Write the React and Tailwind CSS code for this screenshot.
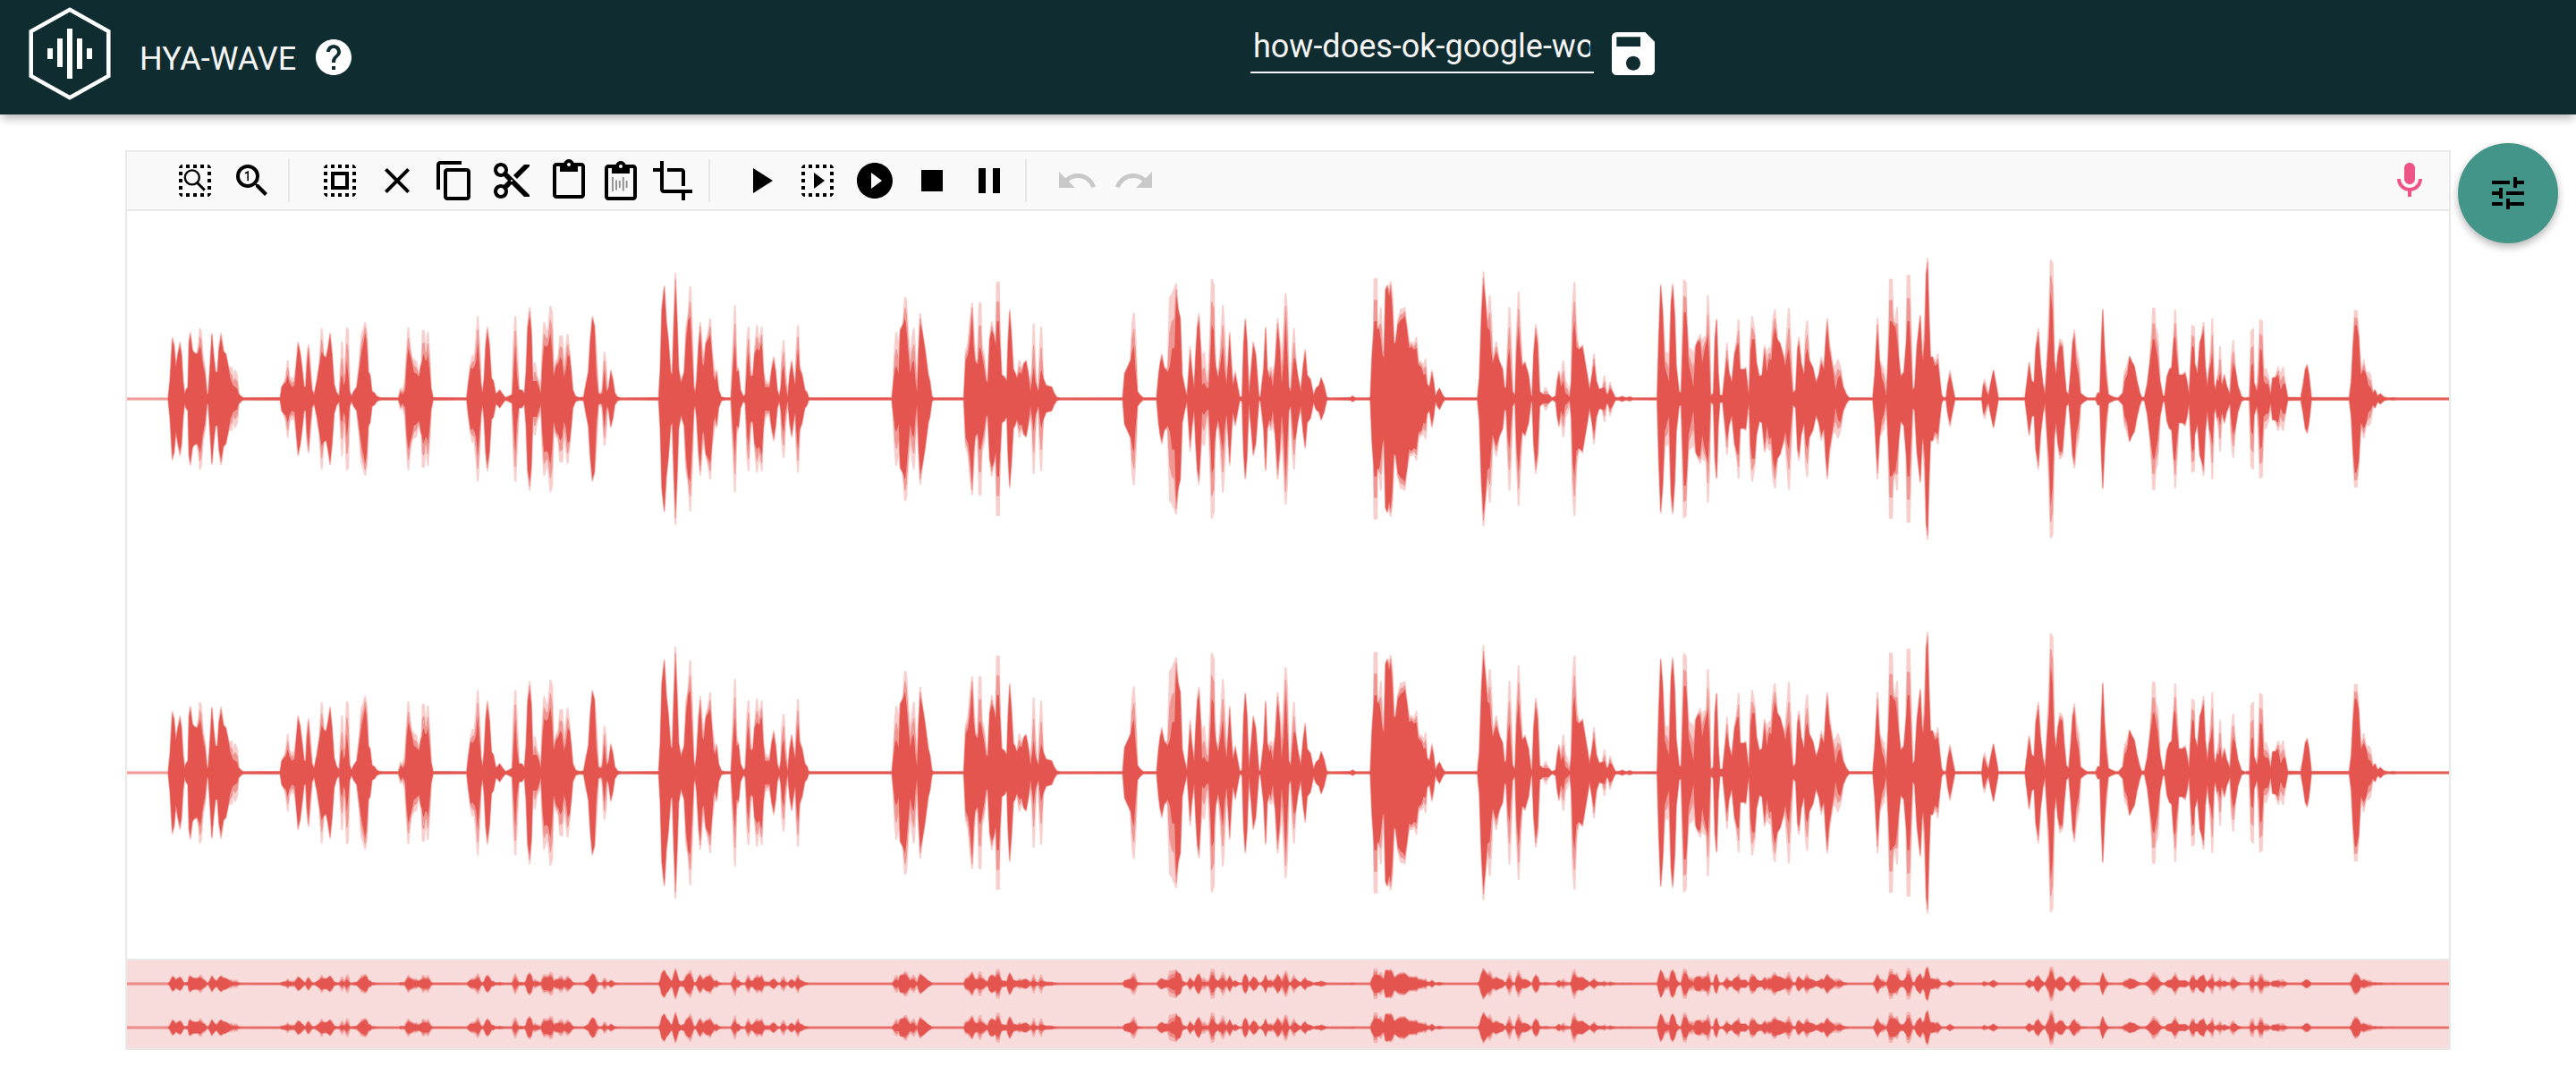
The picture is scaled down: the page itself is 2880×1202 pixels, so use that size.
import React from "react";
import {
  MdHelp,
  MdSave,
  MdSelectAll,
  MdClose,
  MdContentCopy,
  MdContentCut,
  MdContentPaste,
  MdCrop,
  MdPlayArrow,
  MdPlayCircleFilled,
  MdStop,
  MdPause,
  MdUndo,
  MdRedo,
  MdMic,
  MdTune,
} from "react-icons/md";

/* Recorded speech, in clips. Each clip has its own time base (start, scale);
   a sample reads "time:body" or "time:body:peak", levels in thirds of a unit. */
const CLIPS = [
  {
    start: -2,
    scale: 2.24,
    data:
      "108:8 112:60 118:195:205 122:180 127:108 132:150 137:178:190 141:150 145:60 149:15 152:30 157:40 160:190 163:212:222 168:165 172:155 180:150 185:165:190 187:180:235 190:165:225 194:120:145 200:80:100 205:15 208:20 213:120 217:212:218 221:150 226:90 231:90 235:170 240:205:220 246:160 252:150 258:110 263:70:100 267:55:105 270:45:60 275:40:95 280:35:80 284:17 290:8 296:3 " +
      "388:4 392:40 397:50 402:55:70 407:80:128 411:55:75 417:40:65 424:45:70 428:110 433:180:190 438:155 443:100 448:40 452:40 455:110:130 459:165:180 463:90:120 468:30 473:15 480:60 487:120 492:160:235 497:145 503:138 508:170 513:210:220 518:150 523:50 529:22 536:10 540:70:120 543:80:190 547:45:100 551:60:110 555:130:237 558:90:230 562:25 567:8 572:25 580:40 587:110:130 592:160:215 597:190:235 601:220:255 605:180:220 609:90 613:80 618:25 624:20 630:8 640:3 " +
      "684:3 690:25:35 695:15:25 701:30:60 705:120:150 709:170:237 713:150:180 717:130:142 723:90:130 729:85:125 736:75 740:110 743:120:130 745:140:228 748:150:228 751:130:180 755:130:180 758:150:222 762:100:140 766:35 771:4 " +
      "855:3 860:60 865:105:115 870:100:145 875:110:140 879:130:200 883:190:275 887:120:180 891:50 895:20 899:70 903:180 907:225:240 912:180 917:70 922:60 928:17 933:22 938:30 944:18 952:4 960:8 969:15 973:100:200 977:180:275 981:80:180 986:30 993:30 1000:18 1004:90 1008:240 1013:280:305 1017:230 1021:60 1026:60:120 1031:60:75 1036:40:60 1041:18 1045:120:160 1049:180:255 1054:175:230 1059:180:225 1065:220:310 1069:170:290 1073:75 1079:110:125 1085:120:140 1089:140:210 1094:130:210 1099:75:90 1104:100:170 1108:150:215 1113:140:150 1117:90 1121:30 1128:8 1138:4 " +
      "1148:6 1154:50 1160:90 1165:200 1170:268:275 1175:245 1180:80:150 1185:20 1190:15 1195:20:40 1200:100:155 1204:40:120 1207:25 1211:40 1216:90:95 1221:65 1226:20 1233:6 1242:2 " +
      "1336:4 1340:100 1344:300 1350:372:378 1355:260 1360:200 1366:90 1370:80 1374:250 1378:380:420 1382:260 1386:100 1392:55 1400:90 1405:200:240 1410:265:280 1415:275:375 1419:170:250 1424:40 1427:20 1431:60 1436:180 1440:230:255 1445:120:170 1449:110:140 1454:185 1460:200:220 1465:215:268 1469:160 1473:80:120 1477:60:75 1481:85:95 1486:30 1493:6 1503:3 1517:3 1522:110:160 1527:190:312 1531:90:120 1536:95 1541:30 1548:8 1553:15 1558:130:200 1561:160:240 1565:80:120",
  },
  {
    start: 698,
    scale: 2.24,
    data:
      "0:75 4:80 8:150 14:170:245 20:160:180 26:190:240 30:100 34:40:65 40:40:55 46:40:55 51:100 56:130:140 61:90 65:30 70:8 74:40 77:90:150 81:115:195 85:50:100 91:5 96:80 101:120:127 106:75 110:45 113:110:160 117:170:245 121:100:110 127:80 134:30 139:22 144:3 " +
      "352:3 356:60 360:100:180 363:110:222 369:85:170 373:230 380:250 385:270:340 388:240:330 393:160:215 398:85:120 403:120:200 407:130:235 411:60:150 415:20 419:170 423:255:285 428:225 435:165 443:80 447:60 452:10 456:3 " +
      "532:3 537:130:160 543:150:185 548:200:260 553:290:320 557:170:220 561:125:130 567:115:130 571:170:320 574:170:320 577:150:180 583:105:145 588:60:75 592:55 597:200 602:230:257 607:215 612:180 615:260:390 620:260:390 623:180:200 627:80 633:75 640:60 643:190 647:285:298 651:220 656:100 660:90 665:70 671:90:128 677:85:100 683:120 688:125:128 693:90 699:25:50 703:60:100 707:110:250 711:60:120 714:45 719:25 722:60:150 726:100:240 731:70 738:45 752:40 758:20 765:5 775:2 " +
      "930:3 935:85 942:105 950:130 954:160:250 958:180:287 962:100:200 967:25 974:12 982:3 1015:3 1020:80 1024:120 1028:140:150 1034:105 1043:90:100 1048:110:340 1054:170:350 1060:170:370 1064:350:385 1069:300 1074:270 1079:80 1085:40 1091:8 1095:80 1099:150:175 1103:100 1109:35 1113:150 1117:240 1121:265:285 1125:180 1129:45:130 1134:55:155 1139:40:85 1145:35:70 1150:150:250 1153:250:400 1158:230:380 1160:150:200 1163:110 1169:70 1175:120:170 1181:180:312 1185:100:220 1190:50 1194:120 1198:205:222 1202:120 1206:45 1212:80:90 1218:40 1223:5 1229:8 1233:180 1237:258:268 1241:200 1246:15 1252:100 1257:180:190 1263:150 1271:10 1275:5 1283:100 1288:230:240 1292:100 1297:70:90 1301:80:105 1306:40:85 1312:120 1318:240:268 1323:180:200 1328:50:120 1333:120:220 1338:270:352 1342:160:290 1346:40 1351:25 1355:90:160 1359:140:235 1363:130 1368:80 1376:25 1382:110 1387:155:165 1392:80 1400:65 1408:12 1414:35 1422:45 1427:70 1434:45 1441:5 1447:2 1500:4 1506:9 1514:2 1549:3",
  },
  {
    start: 1358,
    scale: 2.24,
    data:
      "72:8 76:140 80:220 82:260:402 88:260:402 89:235 94:235:250 98:200:305 102:150:180 106:135:165 110:365 114:378:380 119:345:375 123:370:392 127:300:340 131:185 135:190 141:250:260 148:265:300 154:270:300 158:280:305 163:240 169:170:190 175:175:190 181:165:180 187:170:205 192:115:130 200:105:122 205:80:110 210:85:133 214:50 220:40 226:85:95 230:60 235:8 240:25 245:35 252:15 258:3 " +
      "340:3 345:70 350:280 355:390:425 360:330 365:240:260 371:230:345 375:160:260 378:120 387:160:190 395:125 403:100 408:35 412:40 416:130:180 420:170:305 424:90:200 428:25 434:12 438:160:200 443:245:357 447:170:240 452:110 459:120:125 468:80 474:15 477:8 481:150 486:225:248 491:180:200 496:25 504:15 511:15:37 518:15 527:3 536:10 540:60 544:85:92 549:40:60 555:60:126 560:20:60 565:15:48 571:6 575:60 579:220:320 583:260:390 588:175:220 594:165 603:175:180 610:120 615:80 621:30 627:80 632:120:150 638:60 645:32 653:35 658:40:75 664:15 668:20 672:35:55 678:25 685:5 692:3 703:8 712:3 722:7 730:2 " +
      "790:3 794:200 799:375:382 804:290 809:110:150 815:80:155 820:60:130 825:320 829:372:385 834:280 838:110 845:25 850:20 854:180:230 857:290:398 862:290:390 865:240 869:120:170 875:80:165 881:40:150 887:180 893:195:200 898:190:215 903:120:185 908:160:205 914:195:210 917:220:345 921:120:240 924:10 931:20 935:200 939:262:266 943:90 947:12 954:12 960:90 965:140:185 970:90 977:55 984:150 990:180:200 994:190:265 998:100 1005:98 1012:100:105 1017:40 1020:15 1024:160:200 1028:200:275 1034:200:225 1039:120 1046:75 1053:80 1059:160:178 1065:90:150 1071:135:170 1076:130:170 1080:200:260 1085:240:298 1091:200 1098:185 1105:150 1111:110:140 1116:150:230 1120:170:302 1124:110:200 1130:20 1137:30 1142:170 1145:185:205 1151:120 1158:80 1162:150:220 1166:170:260 1171:130 1180:105 1188:55 1195:80 1201:120:138 1208:100 1212:190 1216:250:268 1221:170:190 1230:100:110 1237:30:110 1243:70:130 1249:80:105 1256:40 1264:15 1271:3 " +
      "1330:3 1335:80 1339:180 1342:230:268 1347:130 1353:70:110 1358:50:100 1364:10 1369:150 1373:260:400 1378:260:400 1381:250:270 1387:240:260 1391:200:305 1395:140 1400:75 1408:90 1414:190 1417:260:413 1422:260:413 1425:170:260 1430:30 1435:40 1441:180 1449:272:280 1453:160",
  },
  {
    start: 2008,
    scale: 2.529,
    data:
      "0:130:140 5:200:270 9:420 13:445:470 17:270 21:140 27:140 33:110:130 38:115:130 42:120:150 47:70 52:15 57:4 65:4 70:50 76:80:92 82:50 90:3 166:3 171:50 174:45:65 179:25:40 185:12 191:50 199:95 206:50 213:3 " +
      "288:3 294:60 300:115:122 307:60 314:55 319:170 326:215:235 332:120 339:50 345:15 350:110 356:200:270 361:360:465 366:300:455 371:130 376:80 381:150 387:180:200 394:175:190 399:100 405:25 412:15 418:100 423:190 428:210:230 433:120:170 440:80:130 445:20 455:10 465:2 488:3 494:20 500:20 504:180 508:295:300 513:170 518:70:100 524:15 534:8 545:3 552:3 565:20 570:60:90 577:80:110 584:142 590:125 597:110 605:60 613:20 618:5 " +
      "626:5 634:50 641:120 648:180:240 650:200:303 654:200:303 657:180:240 663:140:215 670:60 678:10 683:10 690:75 697:100 703:105 709:200 713:210:297 717:150:210 723:80 733:80 741:85:90 746:60 752:15 757:120 761:180:245 766:170:240 768:120 776:85 783:190 788:210 793:230:255 798:110 804:40 809:100 814:120:170 818:160:268 823:50 827:30 831:65 836:60:100 840:90:175 845:45 852:75:82 858:45 868:15 872:80:140 877:120:195 883:100 890:45 900:8 910:2 " +
      "923:5 928:110:225 933:120:235 936:55 944:25 949:60:130 953:170:265 958:160:260 963:60:90 969:50:100 976:50:75 983:15 988:70 997:72 1004:80:105 1011:30:80 1018:50:105 1024:50 1031:5 1068:4 1075:50 1081:100 1086:110:115 1091:80 1098:4 1205:4 1211:60 1216:180 1221:250:295 1226:245:295 1232:210 1238:80 1246:100:130 1253:80 1259:45:90 1265:40:80 1272:20 1278:30 1285:10 1293:17 1303:6 1315:2 1330:4 1340:2 1488:2",
  },
];

const LENGTH = 2596;

const SAMPLES = CLIPS.flatMap(({ start, scale, data }) =>
  data.split(" ").map((s) => {
    const [t, body, peak] = s.split(":").map(Number);
    return { x: start + t / scale, body: body / 3, peak: (peak ?? body) / 3 };
  })
);

function outline(level, cy, gain) {
  const top = SAMPLES.map((s) => `${s.x.toFixed(1)},${(cy - level(s) * gain).toFixed(1)}`);
  const bottom = SAMPLES.map((s) => `${s.x.toFixed(1)},${(cy + level(s) * gain).toFixed(1)}`).reverse();
  return [...top, ...bottom].join(" ");
}

const bodyLevel = (s) => s.body;
const middleLevel = (s) => s.body + (s.peak - s.body) * 0.5;
const peakLevel = (s) => s.peak;

function Channel({ cy, gain }) {
  return (
    <g fill="#e5554f" stroke="#e5554f" strokeLinejoin="round" strokeWidth="0">
      <rect x="0" y={cy - 2} width={LENGTH} height="4" opacity="0.35" />
      <rect x="0" y={cy - 1} width={LENGTH} height="2" opacity="0.35" />
      <polygon points={outline(peakLevel, cy, gain)} strokeWidth="2" opacity="0.28" />
      <polygon points={outline(middleLevel, cy, gain)} strokeWidth="1" opacity="0.45" />
      <polygon points={outline(bodyLevel, cy, gain)} />
    </g>
  );
}

function DottedFrame({ children }) {
  return (
    <svg viewBox="0 0 24 24" className="size-12" fill="currentColor">
      <path d="M3 5h2V3c-1.1 0-2 .9-2 2zm0 8h2v-2H3v2zm4 8h2v-2H7v2zM3 9h2V7H3v2zm10-6h-2v2h2V3zm6 0v2h2c0-1.1-.9-2-2-2zM5 21v-2H3c0 1.1.9 2 2 2zm-2-4h2v-2H3v2zM9 3H7v2h2V3zm2 18h2v-2h-2v2zm8-8h2v-2h-2v2zm0 8c1.1 0 2-.9 2-2h-2v2zm0-12h2V7h-2v2zm0 8h2v-2h-2v2zm-4 4h2v-2h-2v2zm0-16h2V3h-2v2z" />
      {children}
    </svg>
  );
}

function ZoomSelectionIcon() {
  return (
    <DottedFrame>
      <circle cx="10.4" cy="10.2" r="4" fill="none" stroke="currentColor" strokeWidth="1.2" />
      <path d="M13.2 13.1L17.4 17.3" stroke="currentColor" strokeWidth="1.5" />
    </DottedFrame>
  );
}

function PlaySelectionIcon() {
  return (
    <DottedFrame>
      <path d="M10 7.5v9l6-4.5z" />
    </DottedFrame>
  );
}

function ZoomResetIcon() {
  return (
    <svg viewBox="0 0 24 24" className="size-12" fill="currentColor">
      <path d="M15.5 14h-.79l-.28-.27A6.471 6.471 0 0 0 16 9.5 6.5 6.5 0 1 0 9.5 16c1.61 0 3.09-.59 4.23-1.57l.27.28v.79l5 4.99L20.49 19l-4.99-5zm-6 0C7.01 14 5 11.99 5 9.5S7.01 5 9.5 5 14 7.01 14 9.5 11.99 14 9.5 14z" />
      <path d="M8 7.9l1.6-.8v5" fill="none" stroke="currentColor" strokeWidth="0.8" />
    </svg>
  );
}

function PasteMixIcon() {
  return (
    <svg viewBox="3 -1 18 24" className="h-12 w-9" fill="currentColor">
      <path d="M19 2h-4.18C14.4.84 13.3 0 12 0c-1.3 0-2.4.84-2.82 2H5c-1.1 0-2 .9-2 2v16c0 1.1.9 2 2 2h14c1.1 0 2-.9 2-2V4c0-1.1-.9-2-2-2zm-7 0c.55 0 1 .45 1 1s-.45 1-1 1-1-.45-1-1 .45-1 1-1zm7 18H5V4h2v3h10V4h2v16z" />
      <path d="M7.5 9v8M9.5 10.7v5.5M11.4 11v4M13.4 9v7.700M15.3 11v4" stroke="#8c8c8c" strokeWidth="0.9" />
    </svg>
  );
}

function Logo() {
  return (
    <svg viewBox="0 0 92 104" className="h-[104px] w-[92px]">
      <path d="M46 2.8L89.3 27v50L46 101.2 2.7 77V27z" fill="none" stroke="#fff" strokeWidth="4.5" />
      <path d="M21 46h6v12h-6zM32 35h6v32h-6zM43 24h6v56h-6zM54 35h6v34h-6zM65 46h6v12h-6z" fill="#fff" />
    </svg>
  );
}

function Tool({ label, disabled, children }) {
  return (
    <button
      type="button"
      aria-label={label}
      title={label}
      disabled={disabled}
      className="shrink-0 text-black disabled:text-[#c8c8c8]"
    >
      {children}
    </button>
  );
}

function Divider() {
  return <span className="mr-4 h-12 w-0.5 shrink-0 bg-[#e8e8e8]" />;
}

export default function App() {
  return (
    <div className="flex h-screen flex-col bg-white font-['Roboto',sans-serif]">
      <header className="relative z-10 grid h-32 shrink-0 grid-cols-[1398fr_1482fr] bg-[#0f2c30] text-[#f5f5f5] shadow-[0_6px_10px_-2px_rgba(0,0,0,0.3)]">
        <div className="flex items-start pt-2 pl-8">
          <Logo />
          <h1 className="ml-8 pt-[34px] text-4xl leading-12 font-normal">HYA-WAVE</h1>
          <button type="button" aria-label="Help" className="mt-8 ml-[18px] text-white">
            <MdHelp className="size-12" />
          </button>
        </div>
        <div className="flex items-start gap-3 pt-7">
          <input
            aria-label="File name"
            defaultValue="how-does-ok-google-work"
            className="h-[54px] w-96 border-b-2 border-[#f5f5f5] bg-transparent pr-1 pb-1 pl-[3px] text-4xl outline-none"
          />
          <button type="button" aria-label="Save" className="text-white">
            <MdSave className="size-16" />
          </button>
        </div>
      </header>

      <main className="flex min-h-0 flex-1 items-stretch gap-2 pt-8 pr-5 pb-7 pl-35">
        <section className="mt-2 flex min-w-0 flex-1 flex-col border-2 border-[#e8e8e8]">
          <div className="flex h-[66px] shrink-0 items-center gap-4 border-b-2 border-[#e8e8e8] bg-[#f9f9f9] pr-5 pl-13">
            <Tool label="Zoom to selection"><ZoomSelectionIcon /></Tool>
            <Tool label="Reset zoom"><ZoomResetIcon /></Tool>
            <Divider />
            <Tool label="Select all"><MdSelectAll className="size-12" /></Tool>
            <Tool label="Clear selection"><MdClose className="size-12" /></Tool>
            <Tool label="Copy"><MdContentCopy className="size-12" /></Tool>
            <Tool label="Cut"><MdContentCut className="size-12" /></Tool>
            <Tool label="Paste"><MdContentPaste className="size-12" /></Tool>
            <Tool label="Paste mix"><PasteMixIcon /></Tool>
            <Tool label="Crop"><MdCrop className="size-12" /></Tool>
            <Divider />
            <Tool label="Play"><MdPlayArrow className="size-12" /></Tool>
            <Tool label="Play selection"><PlaySelectionIcon /></Tool>
            <Tool label="Play all"><MdPlayCircleFilled className="size-12" /></Tool>
            <Tool label="Stop"><MdStop className="size-12" /></Tool>
            <Tool label="Pause"><MdPause className="size-12" /></Tool>
            <Divider />
            <Tool label="Undo" disabled><MdUndo className="size-12" /></Tool>
            <Tool label="Redo" disabled><MdRedo className="size-12" /></Tool>
            <button type="button" aria-label="Record" className="ml-auto text-[#ee5586]">
              <svg viewBox="0 0 24 24" className="size-12" fill="currentColor">
                <path d="M12 14c1.66 0 3-1.34 3-3V5c0-1.66-1.34-3-3-3S9 3.34 9 5v6c0 1.660 1.340 3 3 3z" />
                <path d="M17 11c0 2.760-2.240 5-5 5s-5-2.240-5-5H5c0 3.530 2.610 6.430 6 6.920V21h2v-3.080c3.390-.49 6-3.390 6-6.920h-2z" />
              </svg>
            </button>
          </div>
          <svg viewBox="0 0 2596 836" preserveAspectRatio="none" className="min-h-0 w-full flex-1">
            <Channel cy={210} gain={1} />
            <Channel cy={628} gain={1} />
          </svg>
          <div className="shrink-0 border-t-2 border-[#e8e8e8] bg-[#f8dcdc]">
            <svg viewBox="0 0 2596 98" preserveAspectRatio="none" className="block h-[98px] w-full">
              <Channel cy={26} gain={0.12} />
              <Channel cy={75} gain={0.12} />
            </svg>
          </div>
        </section>
        <button
          type="button"
          aria-label="Settings"
          className="flex size-28 shrink-0 items-center justify-center rounded-full bg-[#429588] text-black shadow-[0_4px_10px_rgba(0,0,0,0.3)]"
        >
          <MdTune className="size-12" />
        </button>
      </main>
    </div>
  );
}
